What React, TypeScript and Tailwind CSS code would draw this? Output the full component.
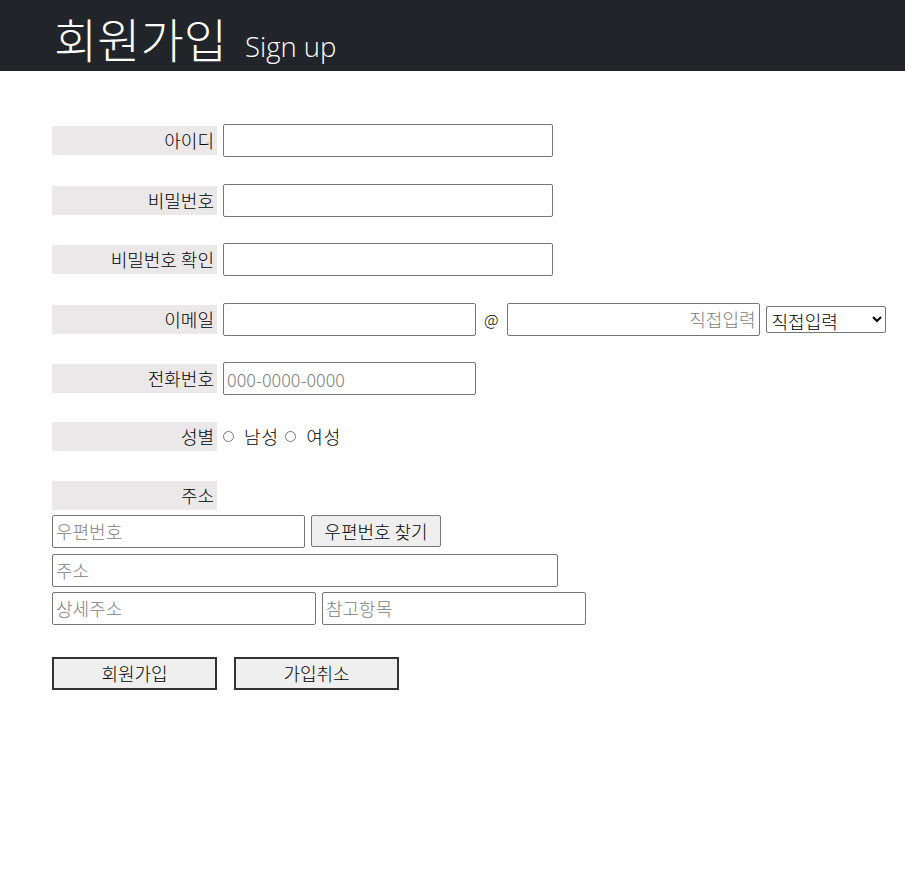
import React from 'react';

const font = { fontFamily: '"Noto Sans CJK KR", "Noto Sans", sans-serif' };

function Label({ children }: { children: React.ReactNode }) {
  return (
    <span className="inline-block w-[165px] h-[29px] leading-[29px] bg-[#eae8e8] text-right pr-[3px] text-[18px] text-black shrink-0">
      {children}
    </span>
  );
}

const inputCls =
  'h-[33px] border border-[#767676] rounded-[2px] px-[3px] text-[18px] font-light text-black placeholder:text-[#808080] outline-none bg-white';

export default function App() {
  return (
    <div className="min-h-[885px] bg-white font-light" style={font}>
      <header className="h-[71px] bg-[#212529] flex items-end pl-[54px] pb-[10px]">
        <h1 className="text-[47px] leading-none text-white font-light">회원가입</h1>
        <span className="ml-[18px] text-[27.5px] leading-none text-white mb-[1px]" style={{ fontFamily: '"Open Sans", "Noto Sans CJK KR", sans-serif' }}>
          Sign up
        </span>
      </header>

      <form className="pl-[52px] pt-[53px]" onSubmit={e => e.preventDefault()}>
        <div className="flex flex-col gap-[26.5px]">
          <div className="flex items-center gap-[6px]">
            <Label>아이디</Label>
            <input className={`${inputCls} w-[330px]`} />
          </div>
          <div className="flex items-center gap-[6px]">
            <Label>비밀번호</Label>
            <input type="password" className={`${inputCls} w-[330px]`} />
          </div>
          <div className="flex items-center gap-[6px]">
            <Label>비밀번호 확인</Label>
            <input type="password" className={`${inputCls} w-[330px]`} />
          </div>
          <div className="flex items-center gap-[6px]">
            <Label>이메일</Label>
            <input className={`${inputCls} w-[253px]`} />
            <span className="text-[16px] text-black px-[2px]">@</span>
            <input className={`${inputCls} w-[253px] text-right`} placeholder="직접입력" />
            <select className="h-[27px] w-[120px] border border-[#767676] rounded-[2px] text-[18px] text-black bg-white pl-[1px]">
              <option>직접입력</option>
              <option>naver.com</option>
              <option>gmail.com</option>
            </select>
          </div>
          <div className="flex items-center gap-[6px]">
            <Label>전화번호</Label>
            <input className={`${inputCls} w-[253px]`} placeholder="000-0000-0000" />
          </div>
          <div className="flex items-center h-[29px] gap-[6px]">
            <Label>성별</Label>
            <label className="flex items-center gap-[10px] text-[18px] text-black tracking-[1px]">
              <input type="radio" name="gender" className="w-[11px] h-[11px] m-0" />
              남성
            </label>
            <label className="flex items-center gap-[10px] text-[18px] text-black tracking-[1px]">
              <input type="radio" name="gender" className="w-[11px] h-[11px] m-0" />
              여성
            </label>
          </div>
        </div>

        <div className="flex flex-col mt-[30px]">
          <Label>주소</Label>
          <div className="flex items-center gap-[6px] mt-[5px]">
            <input className={`${inputCls} w-[253px]`} placeholder="우편번호" />
            <button type="button" className="h-[32px] w-[130px] border border-[#767676] rounded-[2px] bg-[#efefef] text-[18px] text-black">
              우편번호 찾기
            </button>
          </div>
          <input className={`${inputCls} w-[506px] mt-[6px]`} placeholder="주소" />
          <div className="flex items-center gap-[6px] mt-[5px]">
            <input className={`${inputCls} w-[264px]`} placeholder="상세주소" />
            <input className={`${inputCls} w-[264px]`} placeholder="참고항목" />
          </div>
        </div>

        <div className="flex gap-[17px] mt-[32px]">
          <button type="submit" className="h-[33px] w-[165px] border-2 border-[#333] bg-[#efefef] text-[18px] text-black">
            회원가입
          </button>
          <button type="button" className="h-[33px] w-[165px] border-2 border-[#333] bg-[#efefef] text-[18px] text-black">
            가입취소
          </button>
        </div>
      </form>
    </div>
  );
}
